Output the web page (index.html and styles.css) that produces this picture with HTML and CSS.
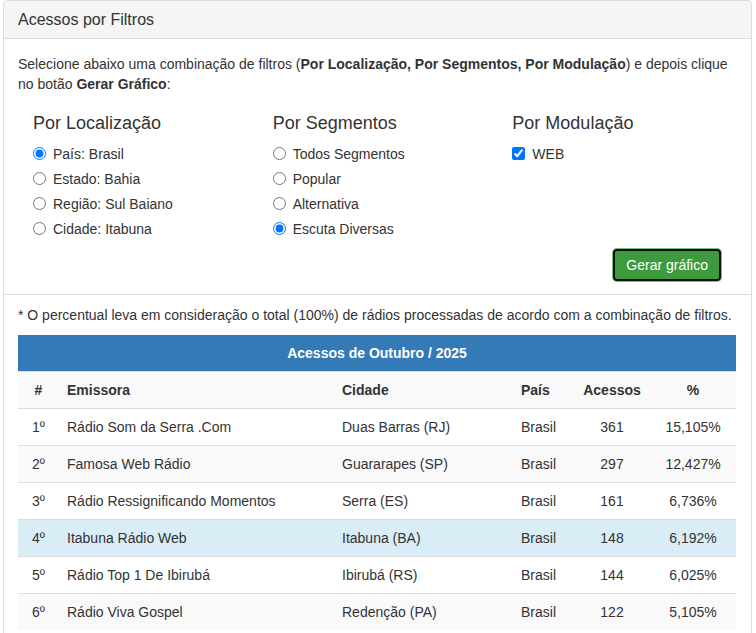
FILE: index.html
```html
<!DOCTYPE html>
<html lang="pt-BR">
<head>
  <meta charset="UTF-8" />
  <title>Acessos por Filtros</title>
  <link rel="stylesheet" href="styles.css">
</head>
<body>
  <div class="panel">
    <div class="panel-heading">Acessos por Filtros</div>

    <div class="panel-body">
      <p class="intro">
        Selecione abaixo uma combinação de filtros (<b>Por Localização, Por Segmentos, Por Modulação</b>) e depois clique no botão <b>Gerar Gráfico</b>:
      </p>

      <div class="filters">
        <div class="filter-col">
          <h4>Por Localização</h4>
          <label class="opt"><input type="radio" name="loc" checked> País: Brasil</label>
          <label class="opt"><input type="radio" name="loc"> Estado: Bahia</label>
          <label class="opt"><input type="radio" name="loc"> Região: Sul Baiano</label>
          <label class="opt"><input type="radio" name="loc"> Cidade: Itabuna</label>
        </div>
        <div class="filter-col">
          <h4>Por Segmentos</h4>
          <label class="opt"><input type="radio" name="seg"> Todos Segmentos</label>
          <label class="opt"><input type="radio" name="seg"> Popular</label>
          <label class="opt"><input type="radio" name="seg"> Alternativa</label>
          <label class="opt"><input type="radio" name="seg" checked> Escuta Diversas</label>
        </div>
        <div class="filter-col">
          <h4>Por Modulação</h4>
          <label class="opt"><input type="checkbox" checked> WEB</label>
        </div>
      </div>

      <div class="actions">
        <button class="btn-success">Gerar gráfico</button>
      </div>
    </div>

    <div class="panel-body results">
      <p class="note">* O percentual leva em consideração o total (100%) de rádios processadas de acordo com a combinação de filtros.</p>

      <table class="ranking">
        <colgroup>
          <col style="width: 41px">
          <col style="width: 275px">
          <col style="width: 179px">
          <col style="width: 61px">
          <col style="width: 76px">
          <col style="width: 86px">
        </colgroup>
        <thead>
          <tr class="title-row"><th colspan="6">Acessos de Outubro / 2025</th></tr>
        </thead>
        <tbody>
          <tr class="head-row">
            <th class="c">#</th>
            <th>Emissora</th>
            <th>Cidade</th>
            <th>País</th>
            <th class="c">Acessos</th>
            <th class="c">%</th>
          </tr>
          <tr>
            <td class="c">1º</td><td>Rádio Som da Serra .Com</td><td>Duas Barras (RJ)</td><td>Brasil</td><td class="c">361</td><td class="c">15,105%</td>
          </tr>
          <tr>
            <td class="c">2º</td><td>Famosa Web Rádio</td><td>Guararapes (SP)</td><td>Brasil</td><td class="c">297</td><td class="c">12,427%</td>
          </tr>
          <tr>
            <td class="c">3º</td><td>Rádio Ressignificando Momentos</td><td>Serra (ES)</td><td>Brasil</td><td class="c">161</td><td class="c">6,736%</td>
          </tr>
          <tr class="info">
            <td class="c">4º</td><td>Itabuna Rádio Web</td><td>Itabuna (BA)</td><td>Brasil</td><td class="c">148</td><td class="c">6,192%</td>
          </tr>
          <tr>
            <td class="c">5º</td><td>Rádio Top 1 De Ibirubá</td><td>Ibirubá (RS)</td><td>Brasil</td><td class="c">144</td><td class="c">6,025%</td>
          </tr>
          <tr>
            <td class="c">6º</td><td>Rádio Viva Gospel</td><td>Redenção (PA)</td><td>Brasil</td><td class="c">122</td><td class="c">5,105%</td>
          </tr>
        </tbody>
      </table>
    </div>
  </div>
</body>
</html>
```

FILE: styles.css
```css
body {
  margin: 0;
  padding: 0 4px 0 3px;
  font-family: "Liberation Sans", Arial, sans-serif;
  font-size: 14px;
  line-height: 20px;
  color: #333;
  background: #fff;
}

.panel {
  border: 1px solid #ddd;
  border-radius: 4px 4px 0 0;
  background: #fff;
}

.panel-heading {
  padding: 9px 14px;
  font-size: 16px;
  line-height: 19px;
  background: #f5f5f5;
  border-bottom: 1px solid #ddd;
  border-radius: 3px 3px 0 0;
}

.panel-body {
  padding: 15px 14px 13px;
}

.intro {
  margin: 0 0 10px;
}

.filters {
  display: flex;
}

.filter-col {
  flex: 1;
  padding: 0 15px;
  display: flex;
  flex-direction: column;
}

.filter-col h4 {
  margin: 9px 0 8px;
  font-size: 18px;
  font-weight: normal;
  line-height: 20px;
}

.opt {
  display: flex;
  align-items: center;
  height: 25px;
}

.opt input {
  width: 13px;
  height: 13px;
  margin: 0 7px 0 0;
}

.actions {
  display: flex;
  justify-content: flex-end;
  padding-right: 16px;
  margin-top: 8px;
}

.btn-success {
  font-family: inherit;
  font-size: 14px;
  line-height: 20px;
  color: #fff;
  background: #3d9a3d;
  border: 2px solid #111;
  border-radius: 4px;
  padding: 4px 11px;
  box-shadow: 0 0 0 1px #7fbf7f;
  cursor: pointer;
}

.results {
  border-top: 1px solid #ddd;
  padding-top: 10px;
}

.note {
  margin: 0 0 10px;
}

.ranking {
  width: 718px;
  border-collapse: collapse;
  table-layout: fixed;
}

.ranking th,
.ranking td {
  padding: 8px;
  line-height: 20px;
  text-align: left;
  white-space: nowrap;
  overflow: hidden;
}

.ranking td {
  border-top: 1px solid #ddd;
}

.ranking .c {
  text-align: center;
}

.title-row th {
  background: #337ab7;
  color: #fff;
  text-align: center;
}

.head-row th {
  border-top: 1px solid #ddd;
  background: #f9f9f9;
}

.ranking tbody tr:nth-of-type(odd) td {
  background: #f9f9f9;
}

.ranking tbody tr.info td {
  background: #d9edf7;
}
```
